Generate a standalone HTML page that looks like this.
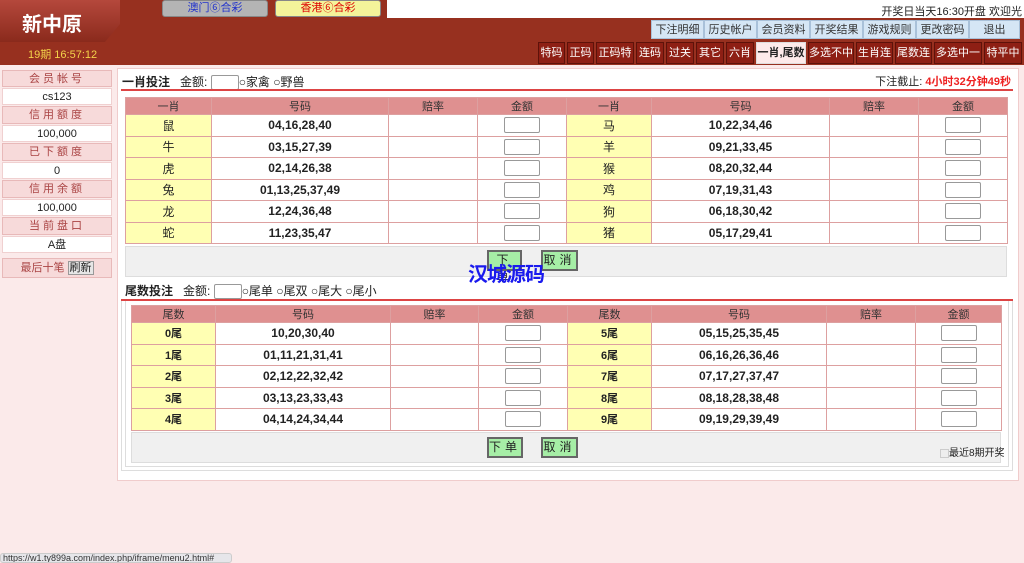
<!DOCTYPE html>
<html><head><meta charset="utf-8"><style>
*{margin:0;padding:0;box-sizing:border-box}
body{width:1024px;height:560px;overflow:hidden;background:#fbeaea;font-family:"Liberation Sans","Noto Sans CJK SC",sans-serif;font-size:11px;color:#222;position:relative}
.a{position:absolute}
#hdr{left:0;top:0;width:1024px;height:65px;background:#97301f}
#logo{left:0;top:0;width:120px;height:42px;background:linear-gradient(180deg,#b5483c,#8a2a1c);clip-path:polygon(0 0,140px 0,105px 42px,0 42px)}
.ttab{top:0;height:17px;border:1px solid #888;border-radius:3px;font-size:11px;text-align:center;line-height:15px}
.bl{top:20px;height:19px;background:#d5e6f5;border:1px solid #a9c1d9;color:#333;text-align:center;line-height:18px;font-size:11px}
.rt{top:42px;height:22px;background:#8e1f14;border:1px solid #5e120a;color:#fff;text-align:center;line-height:21px;font-size:11px}
.sb{left:2px;width:110px;text-align:center;font-size:11px}
.sh{background:#f7dada;border:1px solid #e8b9b9;color:#a44;letter-spacing:3px}
.sv{background:#fff;border:1px solid #f0d0d0}
table{border-collapse:collapse;position:absolute;table-layout:fixed}
td,th{border:1px solid #dda0a0;text-align:center;font-size:12px}
th{background:#df9090;font-weight:normal;font-size:11px;color:#333}
td.y{background:#ffffb3}
td.n{font-weight:bold;font-size:12px}
.ib{display:inline-block;width:36px;height:16px;border:1px solid #999;border-radius:2px;background:#fff;vertical-align:middle}
.btn{background:#a6eea6;border:2px solid #666;font-size:12px;text-align:center;letter-spacing:4px}
.bar{background:#f0f0f0;border:1px solid #ddd}
</style></head><body>
<div id="hdr" class="a"></div>
<div id="logo" class="a"></div>
<div class="a" style="left:22px;top:8px;color:#fff;font-size:20px;font-weight:bold">新中原</div>
<div class="a" style="left:387px;top:0;width:637px;height:18px;background:#fff"></div>
<div class="a" style="right:2px;top:3px;font-size:11px;color:#222;white-space:nowrap">开奖日当天16:30开盘 欢迎光</div>
<div class="a ttab" style="left:162px;width:106px;background:#b4b4b4;color:#2233cc">澳门⑥合彩</div>
<div class="a ttab" style="left:275px;width:106px;background:#f4f49a;color:#d00">香港⑥合彩</div>
<div class="a" style="left:28px;top:46px;color:#f4d34a;font-size:11px">19期 16:57:12</div>
<div class="a bl" style="left:651px;width:53px">下注明细</div>
<div class="a bl" style="left:704px;width:53px">历史帐户</div>
<div class="a bl" style="left:757px;width:53px">会员资料</div>
<div class="a bl" style="left:810px;width:53px">开奖结果</div>
<div class="a bl" style="left:863px;width:53px">游戏规则</div>
<div class="a bl" style="left:916px;width:53px">更改密码</div>
<div class="a bl" style="left:969px;width:51px">退出</div>
<div class="a rt" style="left:538px;width:27px">特码</div>
<div class="a rt" style="left:567px;width:27px">正码</div>
<div class="a rt" style="left:596px;width:38px">正码特</div>
<div class="a rt" style="left:636px;width:28px">连码</div>
<div class="a rt" style="left:666px;width:28px">过关</div>
<div class="a rt" style="left:696px;width:28px">其它</div>
<div class="a rt" style="left:726px;width:28px">六肖</div>
<div class="a rt" style="left:756px;width:50px;background:#fdeaea;color:#222;font-weight:bold;border-color:#ddd">一肖,尾数</div>
<div class="a rt" style="left:808px;width:46px">多选不中</div>
<div class="a rt" style="left:856px;width:37px">生肖连</div>
<div class="a rt" style="left:895px;width:37px">尾数连</div>
<div class="a rt" style="left:934px;width:48px">多选中一</div>
<div class="a rt" style="left:984px;width:38px">特平中</div>

<div class="a sb sh" style="top:70px;height:17px;line-height:16px">会员帐号</div>
<div class="a sb sv" style="top:88px;height:17px;line-height:16px">cs123</div>
<div class="a sb sh" style="top:106px;height:18px;line-height:17px">信用额度</div>
<div class="a sb sv" style="top:125px;height:17px;line-height:16px">100,000</div>
<div class="a sb sh" style="top:143px;height:18px;line-height:17px">已下额度</div>
<div class="a sb sv" style="top:162px;height:17px;line-height:16px">0</div>
<div class="a sb sh" style="top:180px;height:18px;line-height:17px">信用余额</div>
<div class="a sb sv" style="top:199px;height:17px;line-height:16px">100,000</div>
<div class="a sb sh" style="top:217px;height:18px;line-height:17px">当前盘口</div>
<div class="a sb sv" style="top:236px;height:17px;line-height:16px">A盘</div>
<div class="a sb sh" style="top:258px;height:20px;line-height:19px;letter-spacing:0;color:#a44">最后十笔 <span style="background:#e6e6e6;border:1px solid #999;padding:0 1px;color:#222">刷新</span></div>

<div class="a" style="left:117px;top:68px;width:902px;height:413px;background:#fff;border:1px solid #f0cccc"></div>
<div class="a" style="left:122px;top:73px;font-size:12px;white-space:nowrap"><b style="font-size:12px">一肖投注</b>&nbsp;&nbsp; 金额: <span class="ib" style="width:28px;height:15px"></span>○家禽 ○野兽</div>
<div class="a" style="right:13px;top:73px;font-size:11px">下注截止: <b style="color:#e22">4小时32分钟49秒</b></div>
<div class="a" style="left:121px;top:89px;width:892px;height:2px;background:#d44"></div>

<table style="left:125px;top:97px;width:882px">
<colgroup><col style="width:86px"><col style="width:177px"><col style="width:89px"><col style="width:89px"><col style="width:85px"><col style="width:178px"><col style="width:89px"><col style="width:89px"></colgroup>
<tr style="height:16px"><th>一肖</th><th>号码</th><th>赔率</th><th>金额</th><th>一肖</th><th>号码</th><th>赔率</th><th>金额</th></tr>
<tr style="height:21.5px"><td class="y">鼠</td><td class="n">04,16,28,40</td><td></td><td><span class="ib"></span></td><td class="y">马</td><td class="n">10,22,34,46</td><td></td><td><span class="ib"></span></td></tr>
<tr style="height:21.5px"><td class="y">牛</td><td class="n">03,15,27,39</td><td></td><td><span class="ib"></span></td><td class="y">羊</td><td class="n">09,21,33,45</td><td></td><td><span class="ib"></span></td></tr>
<tr style="height:21.5px"><td class="y">虎</td><td class="n">02,14,26,38</td><td></td><td><span class="ib"></span></td><td class="y">猴</td><td class="n">08,20,32,44</td><td></td><td><span class="ib"></span></td></tr>
<tr style="height:21.5px"><td class="y">兔</td><td class="n">01,13,25,37,49</td><td></td><td><span class="ib"></span></td><td class="y">鸡</td><td class="n">07,19,31,43</td><td></td><td><span class="ib"></span></td></tr>
<tr style="height:21.5px"><td class="y">龙</td><td class="n">12,24,36,48</td><td></td><td><span class="ib"></span></td><td class="y">狗</td><td class="n">06,18,30,42</td><td></td><td><span class="ib"></span></td></tr>
<tr style="height:21.5px"><td class="y">蛇</td><td class="n">11,23,35,47</td><td></td><td><span class="ib"></span></td><td class="y">猪</td><td class="n">05,17,29,41</td><td></td><td><span class="ib"></span></td></tr>
</table>
<div class="a bar" style="left:125px;top:246px;width:882px;height:31px"></div>
<div class="a btn" style="left:487px;top:250px;width:35px;height:21px;line-height:17px">下单</div>
<div class="a btn" style="left:541px;top:250px;width:37px;height:21px;line-height:17px">取消</div>
<div class="a" style="left:468px;top:258px;color:#1a1aee;font-size:20px;font-weight:bold;letter-spacing:-1px">汉城源码</div>

<div class="a" style="left:125px;top:282px;font-size:12px;white-space:nowrap"><b>尾数投注</b>&nbsp;&nbsp; 金额: <span class="ib" style="width:28px;height:15px"></span>○尾单 ○尾双 ○尾大 ○尾小</div>
<div class="a" style="left:121px;top:299px;width:892px;height:2px;background:#d44"></div>
<div class="a" style="left:121px;top:301px;width:892px;height:170px;border:1px solid #ddd;border-top:none"></div>
<div class="a" style="left:125px;top:301px;width:884px;height:166px;border:1px solid #ddd;border-top:none"></div>

<table style="left:131px;top:305px;width:870px">
<colgroup><col style="width:84px"><col style="width:175px"><col style="width:88px"><col style="width:89px"><col style="width:84px"><col style="width:175px"><col style="width:89px"><col style="width:86px"></colgroup>
<tr style="height:16px"><th>尾数</th><th>号码</th><th>赔率</th><th>金额</th><th>尾数</th><th>号码</th><th>赔率</th><th>金额</th></tr>
<tr style="height:21.5px"><td class="y n" style="font-size:11px">0尾</td><td class="n">10,20,30,40</td><td></td><td><span class="ib"></span></td><td class="y n" style="font-size:11px">5尾</td><td class="n">05,15,25,35,45</td><td></td><td><span class="ib"></span></td></tr>
<tr style="height:21.5px"><td class="y n" style="font-size:11px">1尾</td><td class="n">01,11,21,31,41</td><td></td><td><span class="ib"></span></td><td class="y n" style="font-size:11px">6尾</td><td class="n">06,16,26,36,46</td><td></td><td><span class="ib"></span></td></tr>
<tr style="height:21.5px"><td class="y n" style="font-size:11px">2尾</td><td class="n">02,12,22,32,42</td><td></td><td><span class="ib"></span></td><td class="y n" style="font-size:11px">7尾</td><td class="n">07,17,27,37,47</td><td></td><td><span class="ib"></span></td></tr>
<tr style="height:21.5px"><td class="y n" style="font-size:11px">3尾</td><td class="n">03,13,23,33,43</td><td></td><td><span class="ib"></span></td><td class="y n" style="font-size:11px">8尾</td><td class="n">08,18,28,38,48</td><td></td><td><span class="ib"></span></td></tr>
<tr style="height:21.5px"><td class="y n" style="font-size:11px">4尾</td><td class="n">04,14,24,34,44</td><td></td><td><span class="ib"></span></td><td class="y n" style="font-size:11px">9尾</td><td class="n">09,19,29,39,49</td><td></td><td><span class="ib"></span></td></tr>
</table>
<div class="a bar" style="left:131px;top:432px;width:870px;height:31px"></div>
<div class="a btn" style="left:487px;top:437px;width:36px;height:21px;line-height:17px">下单</div>
<div class="a btn" style="left:541px;top:437px;width:37px;height:21px;line-height:17px">取消</div>
<div class="a" style="left:940px;top:444px;font-size:10px;white-space:nowrap"><span style="display:inline-block;width:9px;height:9px;border:1px solid #ccc;background:#eee;vertical-align:middle"></span>最近8期开奖</div>

<div class="a" style="left:0;top:553px;width:232px;height:10px;background:#e6e6ea;border:1px solid #ccc;border-radius:3px;font-size:9px;line-height:8px;padding-left:2px;color:#333;overflow:hidden;white-space:nowrap">https://w1.ty899a.com/index.php/iframe/menu2.html#</div>
</body></html>
